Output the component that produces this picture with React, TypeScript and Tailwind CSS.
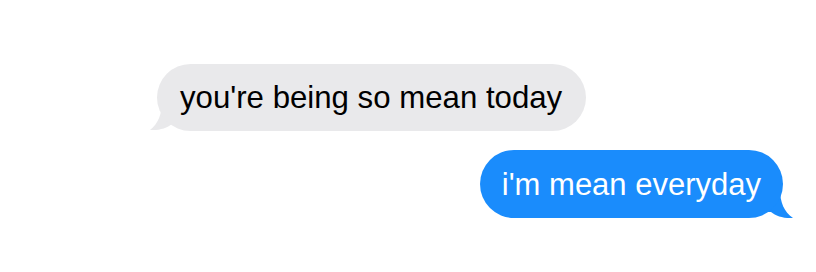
export default function App() {
  return (
    <div className="w-[816px] h-[272px] bg-white flex flex-col" style={{ fontFamily: '"Liberation Sans", Arial, sans-serif' }}>
      <div className="mt-[64px] ml-[157px] self-start relative">
        <svg className="absolute left-[-8px] bottom-[0px]" width="32" height="30" viewBox="0 0 32 30">
          <path d="M13 0 C13 13 9 23 1 29 C11 29.5 18 27 23 23 L32 23 L32 0 Z" fill="#e9e9eb" />
        </svg>
        <div className="relative bg-[#e9e9eb] rounded-[34px] h-[67px] pl-[23px] pr-[24px] flex items-center text-[31.2px] text-black leading-none">
          you're being so mean today
        </div>
      </div>
      <div className="mt-[19px] mr-[33px] self-end relative">
        <svg className="absolute right-[-11px] bottom-[-1px]" width="32" height="30" viewBox="0 0 32 30">
          <path d="M18 0 C18 13 22 23 31 29 C21 29.5 14 27 9 23 L0 23 L0 0 Z" fill="#1a8cfc" />
        </svg>
        <div className="relative bg-[#1a8cfc] rounded-[34px] h-[68px] px-[22px] flex items-center text-[31px] text-white leading-none">
          i'm mean everyday
        </div>
      </div>
    </div>
  );
}
